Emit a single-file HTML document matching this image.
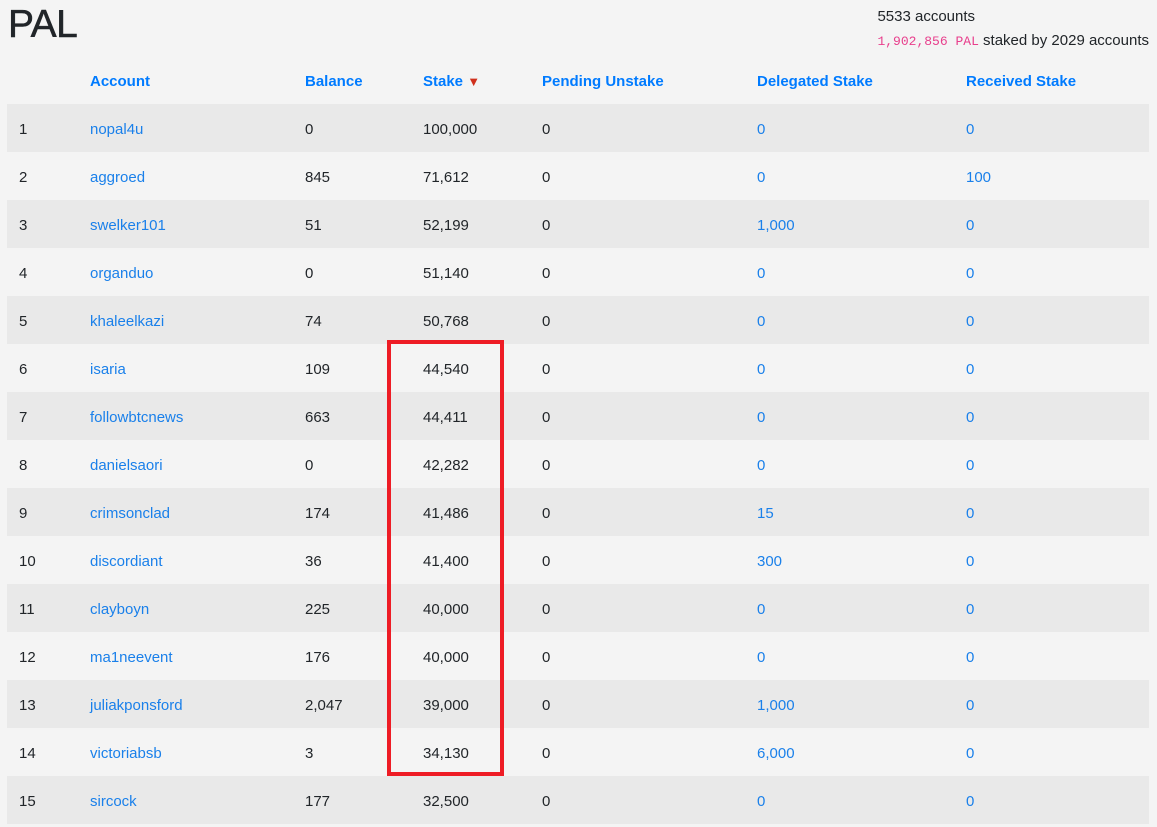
<!DOCTYPE html><html><head><style>
body{margin:0;background:#f4f4f4;font-family:"Liberation Sans",sans-serif;font-size:15px;color:#212529;width:1157px;height:827px;overflow:hidden;position:relative}
h1{position:absolute;left:8px;top:3px;margin:0;font-size:39px;font-weight:normal;letter-spacing:-0.5px;-webkit-text-stroke:0.5px #212529}
.info{position:absolute;right:8px;top:5px;text-align:left;line-height:24px}
.mono{font-family:"Liberation Mono",monospace;font-size:13px;color:#e83e8c}
table{position:absolute;left:7px;top:57px;width:1142px;border-collapse:collapse}
td,th{padding:2px 0 0 12px;height:46px;text-align:left;white-space:nowrap}
th{height:45px;color:#007bff;font-weight:bold}
tbody tr:nth-child(odd){background:#e9e9e9}
a{color:#1a80ea}
.box{position:absolute;left:387px;top:340px;width:109px;height:428px;border:4px solid #ee1c25}
</style></head><body>
<h1>PAL</h1>
<div class="info">5533 accounts<br><span class="mono">1,902,856 PAL</span> staked by 2029 accounts</div>
<table>
<colgroup><col style="width:71px"><col style="width:215px"><col style="width:118px"><col style="width:119px"><col style="width:215px"><col style="width:209px"><col></colgroup>
<thead><tr><th></th><th>Account</th><th>Balance</th><th>Stake <span style="color:#d0301c;font-size:13px">▼</span></th><th>Pending Unstake</th><th>Delegated Stake</th><th>Received Stake</th></tr></thead>
<tbody>
<tr><td>1</td><td><a>nopal4u</a></td><td>0</td><td>100,000</td><td>0</td><td><a>0</a></td><td><a>0</a></td></tr>
<tr><td>2</td><td><a>aggroed</a></td><td>845</td><td>71,612</td><td>0</td><td><a>0</a></td><td><a>100</a></td></tr>
<tr><td>3</td><td><a>swelker101</a></td><td>51</td><td>52,199</td><td>0</td><td><a>1,000</a></td><td><a>0</a></td></tr>
<tr><td>4</td><td><a>organduo</a></td><td>0</td><td>51,140</td><td>0</td><td><a>0</a></td><td><a>0</a></td></tr>
<tr><td>5</td><td><a>khaleelkazi</a></td><td>74</td><td>50,768</td><td>0</td><td><a>0</a></td><td><a>0</a></td></tr>
<tr><td>6</td><td><a>isaria</a></td><td>109</td><td>44,540</td><td>0</td><td><a>0</a></td><td><a>0</a></td></tr>
<tr><td>7</td><td><a>followbtcnews</a></td><td>663</td><td>44,411</td><td>0</td><td><a>0</a></td><td><a>0</a></td></tr>
<tr><td>8</td><td><a>danielsaori</a></td><td>0</td><td>42,282</td><td>0</td><td><a>0</a></td><td><a>0</a></td></tr>
<tr><td>9</td><td><a>crimsonclad</a></td><td>174</td><td>41,486</td><td>0</td><td><a>15</a></td><td><a>0</a></td></tr>
<tr><td>10</td><td><a>discordiant</a></td><td>36</td><td>41,400</td><td>0</td><td><a>300</a></td><td><a>0</a></td></tr>
<tr><td>11</td><td><a>clayboyn</a></td><td>225</td><td>40,000</td><td>0</td><td><a>0</a></td><td><a>0</a></td></tr>
<tr><td>12</td><td><a>ma1neevent</a></td><td>176</td><td>40,000</td><td>0</td><td><a>0</a></td><td><a>0</a></td></tr>
<tr><td>13</td><td><a>juliakponsford</a></td><td>2,047</td><td>39,000</td><td>0</td><td><a>1,000</a></td><td><a>0</a></td></tr>
<tr><td>14</td><td><a>victoriabsb</a></td><td>3</td><td>34,130</td><td>0</td><td><a>6,000</a></td><td><a>0</a></td></tr>
<tr><td>15</td><td><a>sircock</a></td><td>177</td><td>32,500</td><td>0</td><td><a>0</a></td><td><a>0</a></td></tr>
</tbody></table>
<div class="box"></div>
</body></html>
